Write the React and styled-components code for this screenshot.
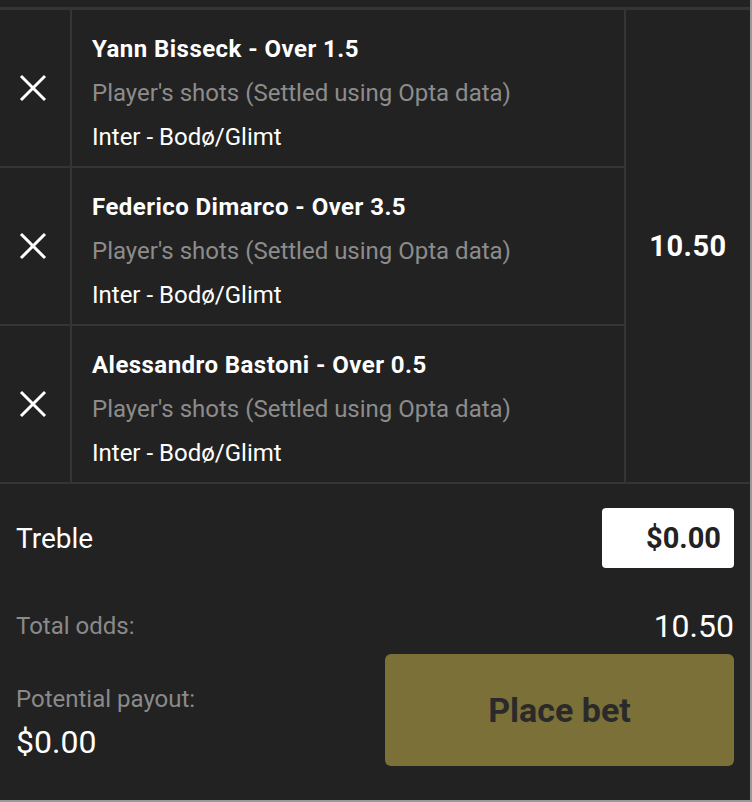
import React from 'react';
import styled, { createGlobalStyle } from 'styled-components';

const GlobalStyle = createGlobalStyle`
    html, body {
        margin: 0;
        padding: 0;
        background: #222222;
    }
    * {
        box-sizing: border-box;
    }
`;

const Frame = styled.div`
    width: 752px;
    height: 802px;
    background: #222222;
    border-right: 2px solid #9a9a9a;
    border-bottom: 2px solid #9a9a9a;
    font-family: Roboto, 'Liberation Sans', sans-serif;
    color: #ffffff;
    display: flex;
    flex-direction: column;
`;

const TopStrip = styled.div`
    height: 10px;
    border-bottom: 3px solid #353535;
`;

const Selections = styled.div`
    display: flex;
    border-bottom: 2px solid #353535;
`;

const List = styled.div`
    flex: 1;
    display: flex;
    flex-direction: column;
`;

const Row = styled.div`
    display: flex;
    border-bottom: ${p => (p.$last ? 'none' : '2px solid #353535')};
    height: ${p => (p.$last ? '156px' : '158px')};
`;

const CloseCell = styled.button`
    width: 72px;
    flex-shrink: 0;
    border: none;
    border-right: 2px solid #353535;
    background: transparent;
    display: flex;
    align-items: center;
    justify-content: center;
    padding: 0 4px 0 0;
    cursor: pointer;
`;

const Info = styled.div`
    flex: 1;
    padding: 17px 20px 7px 20px;
    display: flex;
    flex-direction: column;
`;

const Title = styled.div`
    font-size: 24px;
    font-weight: 700;
    letter-spacing: 0.45px;
    line-height: 44px;
`;

const Market = styled.div`
    font-size: 24px;
    line-height: 44px;
    color: #8c8c8c;
`;

const Match = styled.div`
    font-size: 24px;
    line-height: 44px;
`;

const OddsCell = styled.div`
    width: 126px;
    flex-shrink: 0;
    border-left: 2px solid #353535;
    display: flex;
    align-items: center;
    justify-content: center;
    font-size: 29px;
    font-weight: 700;
    letter-spacing: 0.5px;
`;

const Footer = styled.div`
    padding: 24px 16px 0 16px;
    display: flex;
    flex-direction: column;
`;

const StakeRow = styled.div`
    display: flex;
    align-items: center;
    justify-content: space-between;
    height: 60px;
`;

const BetType = styled.div`
    font-size: 28px;
`;

const StakeInput = styled.div`
    width: 132px;
    height: 60px;
    background: #ffffff;
    border-radius: 4px;
    color: #222222;
    font-size: 29px;
    font-weight: 700;
    display: flex;
    align-items: center;
    justify-content: flex-end;
    padding-right: 13px;
`;

const TotalsRow = styled.div`
    display: flex;
    align-items: center;
    justify-content: space-between;
    margin-top: 40px;
    height: 36px;
`;

const Label = styled.div`
    font-size: 24px;
    color: #8a8a8a;
`;

const BigValue = styled.div`
    font-size: 32px;
`;

const PayRow = styled.div`
    display: flex;
    justify-content: space-between;
    margin-top: 10px;
`;

const Payout = styled.div`
    display: flex;
    flex-direction: column;
    padding-top: 31px;
    gap: 10px;
`;

const PlaceBet = styled.button`
    width: 349px;
    height: 112px;
    border: none;
    border-radius: 6px;
    background: #7a7038;
    color: #2a2a2a;
    font-family: Roboto, 'Liberation Sans', sans-serif;
    font-size: 34px;
    font-weight: 700;
    cursor: pointer;
`;

const CloseIcon = () => (
    <svg width="28" height="28" viewBox="0 0 28 28">
        <path d="M2 2 L26 26 M26 2 L2 26" stroke="#ffffff" strokeWidth="3" fill="none" />
    </svg>
);

const selections = [
    { id: 1, title: 'Yann Bisseck - Over 1.5' },
    { id: 2, title: 'Federico Dimarco - Over 3.5' },
    { id: 3, title: 'Alessandro Bastoni - Over 0.5' },
];

const App = () => {
    return (
        <Frame>
            <GlobalStyle />
            <TopStrip />
            <Selections>
                <List>
                    {selections.map((s, i) => (
                        <Row key={s.id} $last={i === selections.length - 1}>
                            <CloseCell>
                                <CloseIcon />
                            </CloseCell>
                            <Info>
                                <Title>{s.title}</Title>
                                <Market>Player's shots (Settled using Opta data)</Market>
                                <Match>Inter - Bodø/Glimt</Match>
                            </Info>
                        </Row>
                    ))}
                </List>
                <OddsCell>10.50</OddsCell>
            </Selections>
            <Footer>
                <StakeRow>
                    <BetType>Treble</BetType>
                    <StakeInput>$0.00</StakeInput>
                </StakeRow>
                <TotalsRow>
                    <Label>Total odds:</Label>
                    <BigValue>10.50</BigValue>
                </TotalsRow>
                <PayRow>
                    <Payout>
                        <Label>Potential payout:</Label>
                        <BigValue>$0.00</BigValue>
                    </Payout>
                    <PlaceBet>Place bet</PlaceBet>
                </PayRow>
            </Footer>
        </Frame>
    );
};

export default App;
